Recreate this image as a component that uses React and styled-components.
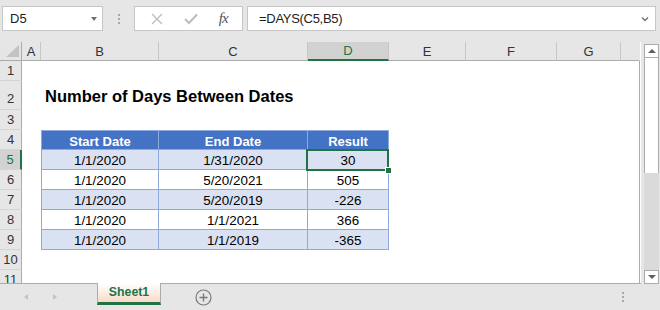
import React from "react";
import styled, { createGlobalStyle, css } from "styled-components";

const GREEN = "#217346";
const TABLE_LINE = "#8ea9db";

const GlobalStyle = createGlobalStyle`
  body {
    margin: 0;
    font-family: "Liberation Sans", Arial, sans-serif;
    background: #e6e6e6;
  }
`;

const Window = styled.div`
  width: 660px;
  height: 310px;
  background: #e6e6e6;
  overflow: hidden;
  display: flex;
  flex-direction: column;
`;

// ---- formula bar ----
const TopBar = styled.div`
  height: 42px;
  box-sizing: border-box;
  padding: 6px 4px 0 2px;
  display: flex;
  align-items: flex-start;
`;

const Box = styled.div`
  height: 25px;
  box-sizing: border-box;
  background: #fff;
  border: 1px solid #c6c6c6;
  display: flex;
  align-items: center;
`;

const NameBox = styled(Box)`
  width: 101px;
  padding: 0 5px 0 7px;
  justify-content: space-between;
  font-size: 13px;
  color: #222;
`;

const Caret = styled.span`
  width: 0;
  height: 0;
  border-left: 3.5px solid transparent;
  border-right: 3.5px solid transparent;
  border-top: 4px solid #707070;
`;

const Grip = styled.div`
  width: 31px;
  height: 25px;
  display: flex;
  flex-direction: column;
  align-items: center;
  justify-content: center;
  gap: 2px;
  span {
    width: 2px;
    height: 2px;
    background: #a8a8a8;
  }
`;

const ButtonBox = styled(Box)`
  width: 109px;
  justify-content: space-around;
  padding: 0 4px 0 6px;
`;

const Fx = styled.span`
  font-family: "Liberation Serif", serif;
  font-style: italic;
  font-size: 15px;
  color: #555;
  letter-spacing: -1px;
`;

const FormulaInput = styled(Box)`
  flex: 1;
  margin-left: 4px;
  padding: 0 6px 0 11px;
  justify-content: space-between;
  font-size: 13px;
  letter-spacing: -0.3px;
  color: #222;
`;

// ---- sheet ----
const MainRow = styled.div`
  height: 242px;
  display: flex;
`;

const cols = [22, 19, 118, 149, 81, 77, 91, 64, 19];
const rowHeights = [19, 20, 29, 20, 20, 20, 20, 20, 20, 20, 20, 20];

const Sheet = styled.div`
  width: 641px;
  box-sizing: border-box;
  border-bottom: 1px solid #ababab;
  background: #fff;
  display: grid;
  grid-template-columns: ${cols.map((c) => c + "px").join(" ")};
  grid-template-rows: ${rowHeights.map((r) => r + "px").join(" ")};
  overflow: hidden;
  font-size: 13.4px;
`;

const ColHead = styled.div`
  background: #e6e6e6;
  box-sizing: border-box;
  border-right: 1px solid ${(p) => (p.$last ? "transparent" : "#c6c6c6")};
  border-bottom: 1px solid #ababab;
  display: flex;
  align-items: center;
  justify-content: center;
  font-size: 13px;
  color: #333;
  ${(p) =>
    p.$active &&
    css`
      background: #d2d2d2;
      color: ${GREEN};
      border-bottom: 2px solid ${GREEN};
    `}
`;

const Corner = styled(ColHead)`
  justify-content: flex-end;
  align-items: flex-end;
  padding: 0 2px 3px 0;
  border-right-color: #ababab;
`;

const RowHead = styled.div`
  background: #e6e6e6;
  box-sizing: border-box;
  border-right: 1px solid #ababab;
  border-bottom: 1px solid #d4d4d4;
  display: flex;
  align-items: ${(p) => (p.$tall ? "flex-end" : "center")};
  padding-bottom: ${(p) => (p.$tall ? "3px" : "0")};
  justify-content: center;
  font-size: 13px;
  color: #333;
  ${(p) =>
    p.$active &&
    css`
      background: #d2d2d2;
      color: ${GREEN};
      border-right: 2px solid ${GREEN};
    `}
`;

const Cell = styled.div`
  box-sizing: border-box;
  background: #fff;
  border-right: ${(p) => (p.$edge ? "1px solid #ababab" : "none")};
`;

const Title = styled.div`
  grid-column: span 5;
  display: flex;
  align-items: flex-end;
  padding: 0 0 4px 4px;
  font-size: 16.5px;
  font-weight: bold;
  color: #000;
  white-space: nowrap;
`;

const TCell = styled.div`
  position: relative;
  box-sizing: border-box;
  display: flex;
  align-items: center;
  justify-content: center;
  padding-top: 2px;
  border-right: 1px solid ${TABLE_LINE};
  border-bottom: 1px solid ${TABLE_LINE};
  border-left: ${(p) => (p.$first ? `1px solid ${TABLE_LINE}` : "none")};
  border-top: ${(p) => (p.$top ? `1px solid ${TABLE_LINE}` : "none")};
  background: ${(p) => (p.$head ? "#4472c4" : p.$band ? "#d9e1f2" : "#fff")};
  color: ${(p) => (p.$head ? "#fff" : "#000")};
  font-weight: ${(p) => (p.$head ? "bold" : "normal")};
  font-size: ${(p) => (p.$head ? "13px" : "13.4px")};
  ${(p) =>
    p.$selected &&
    css`
      z-index: 1;
      &::after {
        content: "";
        position: absolute;
        top: -1px;
        left: -2px;
        right: -1px;
        bottom: -2px;
        border: 2px solid ${GREEN};
      }
      &::before {
        content: "";
        position: absolute;
        right: -4px;
        bottom: -5px;
        width: 5px;
        height: 5px;
        background: ${GREEN};
        border: 1px solid #fff;
        z-index: 2;
      }
    `}
`;

// ---- scrollbar ----
const Scrollbar = styled.div`
  width: 15px;
  margin-left: 3px;
  padding-top: 2px;
  display: flex;
  flex-direction: column;
`;

const ArrowBtn = styled.div`
  height: 14px;
  box-sizing: border-box;
  background: #fff;
  border: 1px solid #ababab;
  display: flex;
  align-items: center;
  justify-content: center;
  span {
    width: 0;
    height: 0;
    border-left: 4px solid transparent;
    border-right: 4px solid transparent;
    ${(p) =>
      p.$up
        ? css`
            border-bottom: 4px solid #606060;
          `
        : css`
            border-top: 4px solid #606060;
          `}
  }
`;

const Thumb = styled.div`
  height: 115px;
  background: #fff;
  box-sizing: border-box;
  border-left: 1px solid #ababab;
  border-right: 1px solid #ababab;
`;

const Track = styled.div`
  flex: 1;
  background: #dadada;
`;

// ---- sheet tabs ----
const BottomBar = styled.div`
  flex: 1;
  display: flex;
  align-items: flex-start;
  position: relative;
`;

const Nav = styled.div`
  width: 97px;
  height: 26px;
  display: flex;
  align-items: center;
  gap: 25px;
  padding-left: 24px;
  box-sizing: border-box;
`;

const NavArrow = styled.span`
  width: 0;
  height: 0;
  border-top: 3.5px solid transparent;
  border-bottom: 3.5px solid transparent;
  ${(p) =>
    p.$left
      ? css`
          border-right: 4px solid #c4c4c4;
        `
      : css`
          border-left: 4px solid #c4c4c4;
        `}
`;

const Tab = styled.div`
  width: 64px;
  height: 22px;
  margin-top: -1px;
  box-sizing: border-box;
  border-left: 1px solid #ababab;
  border-right: 1px solid #ababab;
  border-bottom: 3px solid ${GREEN};
  background: linear-gradient(#ffffff 0%, #fdf0e7 45%, #f8dac6 100%);
  display: flex;
  align-items: center;
  justify-content: center;
  font-size: 12.3px;
  font-weight: bold;
  color: ${GREEN};
  padding-bottom: 1px;
`;

const AddSheet = styled.div`
  margin-left: 34px;
  height: 26px;
  display: flex;
  align-items: center;
`;

const StatusGrip = styled.div`
  margin-left: auto;
  margin-right: 36px;
  height: 26px;
  display: flex;
  flex-direction: column;
  justify-content: center;
  gap: 2px;
  span {
    width: 2px;
    height: 2px;
    background: #a8a8a8;
  }
`;

const letters = ["A", "B", "C", "D", "E", "F", "G"];

const tableRows = [
  ["1/1/2020", "1/31/2020", "30"],
  ["1/1/2020", "5/20/2021", "505"],
  ["1/1/2020", "5/20/2019", "-226"],
  ["1/1/2020", "1/1/2021", "366"],
  ["1/1/2020", "1/1/2019", "-365"],
];

const blanks = (n, key) =>
  Array.from({ length: n }, (_, i) => <Cell key={key + i} />);

const App = () => {
  const rows = [];

  // header letters
  rows.push(
    <Corner key="corner">
      <svg width="13" height="12" viewBox="0 0 13 12">
        <polygon points="13,0 13,12 0,12" fill="#c3c3c3" />
      </svg>
    </Corner>
  );
  letters.forEach((l) =>
    rows.push(
      <ColHead key={"h" + l} $active={l === "D"}>
        {l}
      </ColHead>
    )
  );
  rows.push(<ColHead key="hfill" $last />);

  for (let r = 1; r <= 11; r++) {
    rows.push(
      <RowHead key={"r" + r} $tall={r === 2} $active={r === 5}>
        {r}
      </RowHead>
    );
    if (r === 2) {
      rows.push(<Cell key="2a" />);
      rows.push(<Title key="title">Number of Days Between Dates</Title>);
      rows.push(<Cell key="2g" />);
      rows.push(<Cell key="2f" $edge />);
    } else if (r === 4) {
      rows.push(<Cell key="4a" />);
      ["Start Date", "End Date", "Result"].forEach((h, i) =>
        rows.push(
          <TCell key={"th" + i} $head $top $first={i === 0}>
            {h}
          </TCell>
        )
      );
      rows.push(...blanks(3, "4x"));
      rows.push(<Cell key="4f" $edge />);
    } else if (r >= 5 && r <= 9) {
      const data = tableRows[r - 5];
      rows.push(<Cell key={r + "a"} />);
      data.forEach((v, i) =>
        rows.push(
          <TCell
            key={r + "t" + i}
            $first={i === 0}
            $band={r % 2 === 1}
            $selected={r === 5 && i === 2}
          >
            {v}
          </TCell>
        )
      );
      rows.push(...blanks(3, r + "x"));
      rows.push(<Cell key={r + "f"} $edge />);
    } else {
      rows.push(...blanks(7, r + "x"));
      rows.push(<Cell key={r + "f"} $edge />);
    }
  }

  return (
    <Window>
      <GlobalStyle />
      <TopBar>
        <NameBox>
          D5
          <Caret />
        </NameBox>
        <Grip>
          <span />
          <span />
          <span />
        </Grip>
        <ButtonBox>
          <svg width="12" height="12" viewBox="0 0 12 12">
            <path d="M1 1 L11 11 M11 1 L1 11" stroke="#bdbdbd" strokeWidth="1.4" />
          </svg>
          <svg width="14" height="12" viewBox="0 0 14 12">
            <path d="M1 6 L5 10 L13 1.5" stroke="#bdbdbd" strokeWidth="2" fill="none" />
          </svg>
          <Fx>fx</Fx>
        </ButtonBox>
        <FormulaInput>
          =DAYS(C5,B5)
          <svg width="8" height="6" viewBox="0 0 8 6">
            <path d="M1 1.5 L4 4.5 L7 1.5" stroke="#707070" strokeWidth="1.4" fill="none" />
          </svg>
        </FormulaInput>
      </TopBar>

      <MainRow>
        <Sheet>{rows}</Sheet>
        <Scrollbar>
          <ArrowBtn $up>
            <span />
          </ArrowBtn>
          <Thumb />
          <Track />
          <ArrowBtn>
            <span />
          </ArrowBtn>
        </Scrollbar>
      </MainRow>

      <BottomBar>
        <Nav>
          <NavArrow $left />
          <NavArrow />
        </Nav>
        <Tab>Sheet1</Tab>
        <AddSheet>
          <svg width="17" height="17" viewBox="0 0 17 17">
            <circle cx="8.5" cy="8.5" r="7.5" fill="none" stroke="#7a7a7a" strokeWidth="1.2" />
            <path d="M8.5 4.5 V12.5 M4.5 8.5 H12.5" stroke="#7a7a7a" strokeWidth="1.4" />
          </svg>
        </AddSheet>
        <StatusGrip>
          <span />
          <span />
          <span />
        </StatusGrip>
      </BottomBar>
    </Window>
  );
};

export default App;
